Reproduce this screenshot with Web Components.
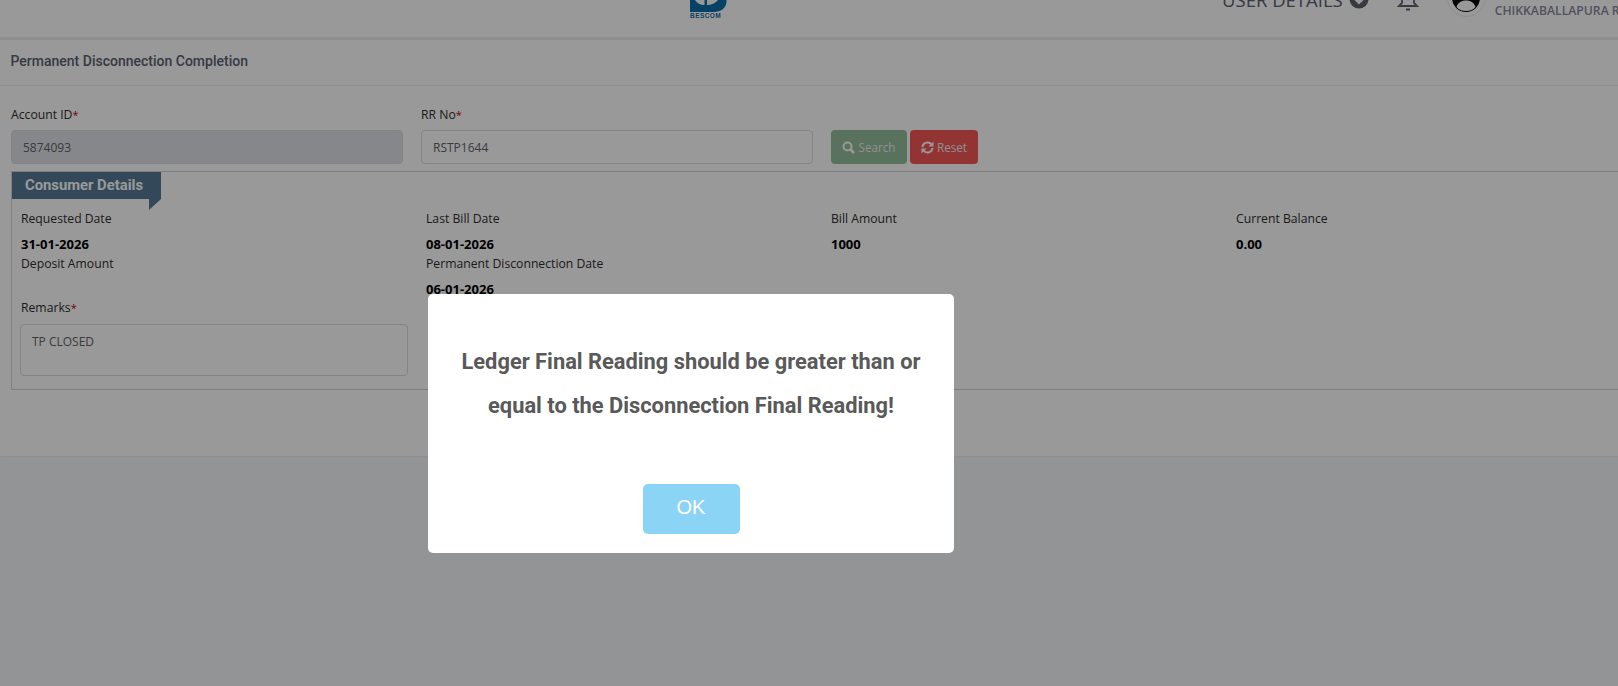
<!DOCTYPE html>
<html>
<head>
<meta charset="utf-8">
<title>Permanent Disconnection Completion</title>
<style>
    html, body { margin: 0; height: 100%; overflow: hidden; }
    body { background: #f6f7fa; font-family: "Open Sans", sans-serif; color: #333; }
</style>
</head>
<body>
<app-header></app-header>
<page-card>
    <span slot="title">Permanent Disconnection Completion</span>
    <search-row></search-row>
    <consumer-details heading="Consumer Details">
        <detail-item label="Requested Date" value="31-01-2026"></detail-item>
        <detail-item label="Last Bill Date" value="08-01-2026"></detail-item>
        <detail-item label="Bill Amount" value="1000"></detail-item>
        <detail-item label="Current Balance" value="0.00"></detail-item>
        <detail-item label="Deposit Amount" value=""></detail-item>
        <detail-item label="Permanent Disconnection Date" value="06-01-2026"></detail-item>
        <span slot="remarks">TP CLOSED</span>
    </consumer-details>
</page-card>
<alert-modal>Ledger Final Reading should be greater than or equal to the Disconnection Final Reading!</alert-modal>

<script>
// header is scrolled part way off the top, so the inner row is pulled up
class AppHeader extends HTMLElement {
    constructor() {
        super();
        this.attachShadow({ mode: 'open' });
        this.shadowRoot.innerHTML = `
            <style>
                :host { display: block; height: 37px; background: #fff; border-bottom: 3px solid #ededed; overflow: hidden; }
                .row { display: flex; align-items: flex-start; height: 37px; }
                .row > * { flex: none; }
                .logo { margin-left: 690px; width: 37px; display: flex; flex-direction: column; }
                .logo svg { display: block; }
                .logo span { font: 700 6.500px/5px "Liberation Sans", sans-serif; letter-spacing: .45px; color: #0a6ea8; margin-top: 1px; white-space: nowrap; }
                .details { margin-left: 495px; margin-top: -12px; font: 400 18.500px/24px "Open Sans", sans-serif; color: #5c5f70; white-space: nowrap; }
                .chev { margin-left: 6px; margin-top: -11px; display: block; }
                .bell { margin-left: 28px; margin-top: -13px; display: block; }
                .avatar { margin-left: 28px; margin-top: -22px; width: 39px; height: 39px; box-sizing: border-box; border: 1px solid #eee; border-radius: 50%; display: flex; align-items: center; justify-content: center; }
                .who { margin-left: 9px; font: 600 12.200px/18px "Open Sans", sans-serif; margin-top: 2px; color: #88899b; white-space: nowrap; }
            </style>
            <div class="row">
                <div class="logo">
                    <svg width="37" height="12" viewBox="0 0 37 12">
                        <path d="M0 0H36.500V2C36 8 31 12 24 12H0Z" fill="#0a6ea8"/>
                        <path d="M5 0Q8 5 14.500 5V0Z" fill="#fff"/>
                        <path d="M17 0V5Q24 5 28 0Z" fill="#fff"/>
                    </svg>
                    <span>BESCOM</span>
                </div>
                <div class="details">USER DETAILS</div>
                <svg class="chev" width="20" height="20" viewBox="0 0 20 20">
                    <circle cx="10" cy="10" r="9.500" fill="#5c5f70"/>
                    <path d="M5 8.500 L10 13.500 L15 8.500" fill="none" stroke="#fff" stroke-width="3"/>
                </svg>
                <svg class="bell" width="22" height="24" viewBox="0 0 22 24" fill="none" stroke="#5c5f70" stroke-width="1.800">
                    <path d="M5 16V9a6 6 0 0 1 12 0v7l3 3H2Z"/>
                    <path d="M9 22.500h4" stroke-width="2"/>
                </svg>
                <div class="avatar">
                    <svg width="28" height="28" viewBox="0 0 28 28">
                        <circle cx="14" cy="14" r="14" fill="#000"/>
                        <circle cx="14" cy="10.500" r="5" fill="#fff"/>
                        <path d="M4.500 23C6 18 10 16.500 14 16.500S22 18 23.500 23C21 26 17.500 27 14 27S7 26 4.500 23Z" fill="#fff"/>
                    </svg>
                </div>
                <div class="who">CHIKKABALLAPURA RURAL</div>
            </div>
        `;
    }
}

class PageCard extends HTMLElement {
    constructor() {
        super();
        this.attachShadow({ mode: 'open' });
        this.shadowRoot.innerHTML = `
            <style>
                :host { display: block; height: 416px; box-sizing: border-box; background: #fff; box-shadow: 0 1px 2px rgba(0, 0, 0, .05); }
                .title { height: 46px; box-sizing: border-box; padding-left: 10.500px; border-bottom: 1px solid #f0f0f0; font: 500 14px/42px Roboto, sans-serif; color: #5a6270; }
                .body { padding: 18px 0 0 11px; }
            </style>
            <div class="title"><slot name="title"></slot></div>
            <div class="body"><slot></slot></div>
        `;
    }
}

class FormField extends HTMLElement {
    constructor() {
        super();
        this.attachShadow({ mode: 'open' });
        const disabled = this.hasAttribute('disabled');
        this.shadowRoot.innerHTML = `
            <style>
                :host { display: block; width: 392px; }
                label { display: block; font: 400 12.200px/22px "Open Sans", sans-serif; color: #2e2e2e; margin-bottom: 4px; }
                b { color: #c00; font-weight: 400; font-size: 11px; }
                .box { height: 34px; box-sizing: border-box; border: 1px solid #ddd; border-radius: 4px; padding: 0 11px; font: 400 12px/34px "Open Sans", sans-serif; color: #5f6368; background: ${disabled ? '#dfe2e6' : '#fff'}; }
            </style>
            <label>${this.getAttribute('label')}<b>*</b></label>
            <div class="box">${this.getAttribute('value')}</div>
        `;
    }
}

class ActionButton extends HTMLElement {
    constructor() {
        super();
        this.attachShadow({ mode: 'open' });
        this.shadowRoot.innerHTML = `
            <style>
                :host { display: inline-flex; align-items: center; justify-content: center; gap: 3px; box-sizing: border-box; height: 34px; border-radius: 4px; color: #fff; font: 400 11.700px "Open Sans", sans-serif; opacity: .95; }
                svg { display: block; }
            </style>
            <slot name="icon"></slot><slot></slot>
        `;
    }
}

class SearchRow extends HTMLElement {
    constructor() {
        super();
        this.attachShadow({ mode: 'open' });
        this.shadowRoot.innerHTML = `
            <style>
                :host { display: flex; gap: 18px; align-items: flex-end; }
                .btns { display: flex; gap: 3px; }
                .search { width: 76px; background: #8fbb96; color: #eee; }
                .reset { width: 68px; background: #f55050; color: #eee; }
            </style>
            <form-field label="Account ID" value="5874093" disabled></form-field>
            <form-field label="RR No" value="RSTP1644"></form-field>
            <div class="btns">
                <action-button class="search">
                    <svg slot="icon" width="13" height="13" viewBox="0 0 13 13" fill="none" stroke="#fff" stroke-width="2">
                        <circle cx="5.500" cy="5.500" r="4"/><path d="M8.500 8.500 L12 12" stroke-width="2.500"/>
                    </svg>
                    Search
                </action-button>
                <action-button class="reset">
                    <svg slot="icon" width="13" height="13" viewBox="0 0 13 13" fill="none" stroke="#fff" stroke-width="2">
                        <path d="M1.500 6A5 5 0 0 1 10.500 3.500"/><path d="M11.500 7A5 5 0 0 1 2.500 9.500"/>
                        <path d="M12.500 0.500V5.500H7.500Z M0.500 12.500V7.500H5.500Z" fill="#fff" stroke="none"/>
                    </svg>
                    Reset
                </action-button>
            </div>
        `;
    }
}

class DetailItem extends HTMLElement {
    constructor() {
        super();
        this.attachShadow({ mode: 'open' });
        this.shadowRoot.innerHTML = `
            <style>
                :host { display: block; height: 45px; padding-left: 9px; }
                .l { font: 400 12.200px/22px "Open Sans", sans-serif; color: #2e2e2e; margin-bottom: 5px; white-space: nowrap; }
                .v { font: 700 13px/19px "Open Sans", sans-serif; color: #000; }
            </style>
            <div class="l">${this.getAttribute('label')}</div>
            <div class="v">${this.getAttribute('value')}</div>
        `;
    }
}

class ConsumerDetails extends HTMLElement {
    constructor() {
        super();
        this.attachShadow({ mode: 'open' });
        this.shadowRoot.innerHTML = `
            <style>
                :host { display: block; margin-top: 7px; height: 219px; box-sizing: border-box; border: 1px solid #d4d4d4; border-right: 0; }
                .ribbon { position: relative; width: 149px; height: 27px; box-sizing: border-box; padding-left: 13px; background: #557a96; color: #fff; font: 700 14.800px/27px Roboto, sans-serif; white-space: nowrap; }
                .ribbon::after { content: ""; position: absolute; right: 0; top: 27px; border-top: 11px solid #557a96; border-left: 12px solid transparent; transform: scaleX(-1); }
                .grid { display: grid; grid-template-columns: repeat(4, 405px); margin-top: 9px; }
                .remarks { padding-left: 8px; }
                .remarks label { display: block; padding-left: 1px; font: 400 12.200px/20px "Open Sans", sans-serif; color: #2e2e2e; margin-bottom: 6px; }
                b { color: #c00; font-weight: 400; font-size: 11px; }
                .area { width: 388px; height: 52px; box-sizing: border-box; border: 1px solid #ddd; border-radius: 4px; padding: 0 11px; font: 400 12px/34px "Open Sans", sans-serif; color: #5f6368; }
            </style>
            <div class="ribbon">${this.getAttribute('heading')}</div>
            <div class="grid"><slot></slot></div>
            <div class="remarks">
                <label>Remarks<b>*</b></label>
                <div class="area"><slot name="remarks"></slot></div>
            </div>
        `;
    }
}

// sweetalert style dialog, sits over the dimmed page
class AlertModal extends HTMLElement {
    constructor() {
        super();
        this.attachShadow({ mode: 'open' });
        this.shadowRoot.innerHTML = `
            <style>
                :host { position: fixed; inset: 0; background: rgba(0, 0, 0, .4); display: flex; justify-content: center; align-items: flex-start; padding: 294px 236px 0 0; box-sizing: border-box; }
                .box { width: 526px; height: 259px; box-sizing: border-box; background: #fff; border-radius: 5px; display: flex; flex-direction: column; align-items: center; padding-top: 46px; }
                .msg { width: 470px; text-align: center; font: 700 21.850px/44px Roboto, sans-serif; color: #595959; }
                .ok { margin-top: 56px; width: 97px; height: 50px; border-radius: 5px; background: #8cd4f6; color: #fff; font: 400 20px/47px "Liberation Sans", sans-serif; text-align: center; }
            </style>
            <div class="box">
                <div class="msg"><slot></slot></div>
                <div class="ok">OK</div>
            </div>
        `;
    }
}

customElements.define('app-header', AppHeader);
customElements.define('page-card', PageCard);
customElements.define('form-field', FormField);
customElements.define('action-button', ActionButton);
customElements.define('search-row', SearchRow);
customElements.define('detail-item', DetailItem);
customElements.define('consumer-details', ConsumerDetails);
customElements.define('alert-modal', AlertModal);
</script>
</body>
</html>
